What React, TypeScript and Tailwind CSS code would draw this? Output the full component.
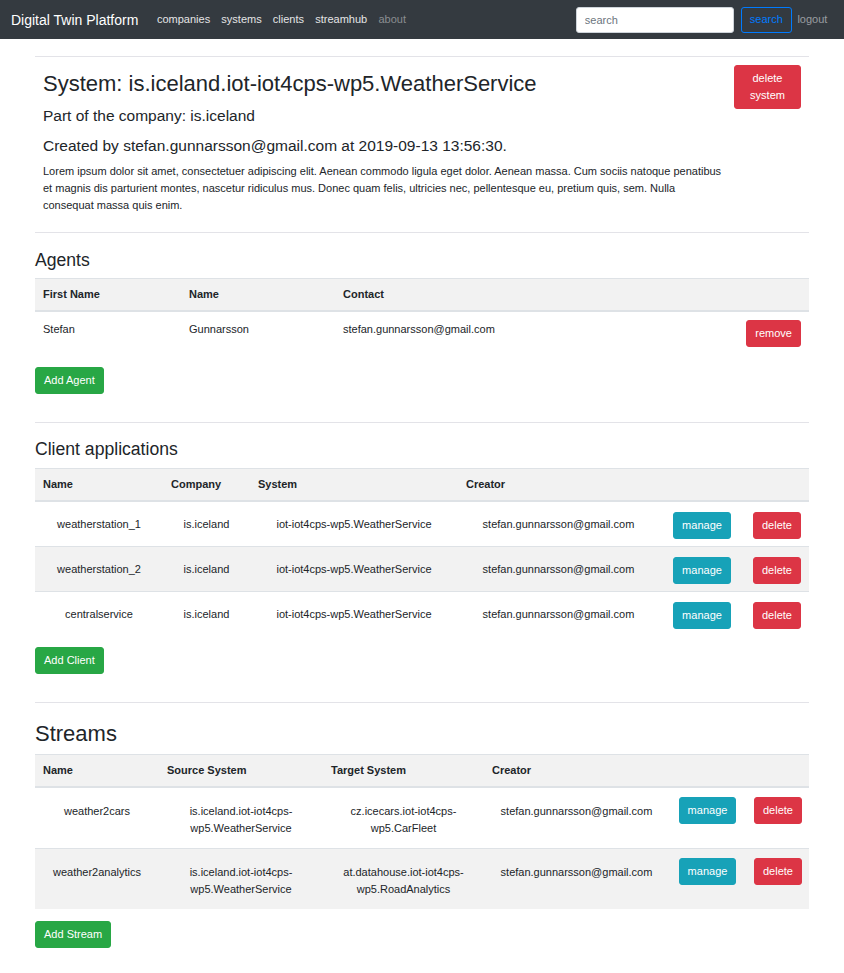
import React from "react";

const EMAIL = "stefan.gunnarsson@gmail.com";

const clients = [
  { name: "weatherstation_1", company: "is.iceland", system: "iot-iot4cps-wp5.WeatherService" },
  { name: "weatherstation_2", company: "is.iceland", system: "iot-iot4cps-wp5.WeatherService" },
  { name: "centralservice", company: "is.iceland", system: "iot-iot4cps-wp5.WeatherService" },
];

const streams = [
  { name: "weather2cars", source: "is.iceland.iot-iot4cps-wp5.WeatherService", target: "cz.icecars.iot-iot4cps-wp5.CarFleet" },
  { name: "weather2analytics", source: "is.iceland.iot-iot4cps-wp5.WeatherService", target: "at.datahouse.iot-iot4cps-wp5.RoadAnalytics" },
];

const btn = "inline-block rounded-[3px] border px-2 py-1 text-[11px] leading-[17px] text-white";
const danger = `${btn} bg-[#dc3545] border-[#dc3545]`;
const info = `${btn} bg-[#17a2b8] border-[#17a2b8]`;
const success = `${btn} bg-[#28a745] border-[#28a745]`;

const th = "border-t border-b-2 border-[#dee2e6] bg-[#f2f2f2] px-2 py-[7px] text-left font-bold leading-[17px]";

function Navbar() {
  return (
    <nav className="flex h-[39px] items-center bg-[#343a40] px-[11px] text-[11px]">
      <span className="mr-[13px] text-[14px] leading-[20px] text-white">Digital Twin Platform</span>
      <div className="flex">
        {["companies", "systems", "clients", "streamhub"].map((l) => (
          <a key={l} className="px-[5.6px] text-[#e4e5e6]">
            {l}
          </a>
        ))}
        <a className="px-[5.6px] text-[#8a8d90]">about</a>
      </div>
      <div className="ml-auto flex items-center">
        <input
          placeholder="search"
          className="h-[26px] w-[158px] rounded-[3px] border border-[#ced4da] bg-white px-2 text-[11px] text-[#495057] outline-none placeholder:text-[#6c757d]"
        />
        <button className="ml-[7px] h-[26px] rounded-[3px] border border-[#007bff] px-2 text-[11px] text-[#007bff]">
          search
        </button>
        <a className="px-[5.6px] text-[#9a9da0]">logout</a>
      </div>
    </nav>
  );
}

function Header() {
  return (
    <div className="flex justify-between px-2 pt-2">
      <div className="w-[682px]">
        <h2 className="mt-[6px] text-[22px] leading-[26px]">System: is.iceland.iot-iot4cps-wp5.WeatherService</h2>
        <p className="mt-[10px] text-[15.5px] leading-[18px]">Part of the company: is.iceland</p>
        <p className="mt-[12px] text-[15.5px] leading-[18px]">
          Created by {EMAIL} at 2019-09-13 13:56:30.
        </p>
        <p className="mt-[8px] text-[11px] leading-[16.8px]">
          Lorem ipsum dolor sit amet, consectetuer adipiscing elit. Aenean commodo ligula eget dolor. Aenean massa. Cum
          sociis natoque penatibus et magnis dis parturient montes, nascetur ridiculus mus. Donec quam felis, ultricies
          nec, pellentesque eu, pretium quis, sem. Nulla consequat massa quis enim.
        </p>
      </div>
      <div>
        <button className={`${danger} w-[67px] leading-[16.8px]`}>delete system</button>
      </div>
    </div>
  );
}

function Agents() {
  return (
    <section>
      <h4 className="mt-[17px] text-[17.6px] leading-[21px]">Agents</h4>
      <table className="mt-[7px] w-full table-fixed border-separate border-spacing-0 text-[11px]">
        <colgroup>
          <col className="w-[146px]" />
          <col className="w-[154px]" />
          <col />
          <col className="w-[72px]" />
        </colgroup>
        <thead>
          <tr>
            <th className={th}>First Name</th>
            <th className={th}>Name</th>
            <th className={th}>Contact</th>
            <th className={th}></th>
          </tr>
        </thead>
        <tbody>
          <tr>
            <td className="px-2 pt-[9px] pb-2 align-top leading-[17px]">Stefan</td>
            <td className="px-2 pt-[9px] pb-2 align-top leading-[17px]">Gunnarsson</td>
            <td className="px-2 pt-[9px] pb-2 align-top leading-[17px]">{EMAIL}</td>
            <td className="px-2 pt-2 pb-[9px] text-right align-top">
              <button className={danger}>remove</button>
            </td>
          </tr>
        </tbody>
      </table>
      <button className={`${success} mt-[11px]`}>Add Agent</button>
    </section>
  );
}

function Clients() {
  const td = "px-2 pt-[14px] pb-[13px] text-center align-top leading-[17px]";
  const tb = "px-2 pt-[10px] text-center align-top";
  return (
    <section>
      <h4 className="mt-[16px] text-[17.6px] leading-[21px]">Client applications</h4>
      <table className="mt-[8px] w-full table-fixed border-separate border-spacing-0 text-[11px]">
        <colgroup>
          <col className="w-[128px]" />
          <col className="w-[87px]" />
          <col className="w-[208px]" />
          <col className="w-[201px]" />
          <col className="w-[86px]" />
          <col className="w-[64px]" />
        </colgroup>
        <thead>
          <tr>
            <th className={th}>Name</th>
            <th className={th}>Company</th>
            <th className={th}>System</th>
            <th className={th}>Creator</th>
            <th className={th}></th>
            <th className={th}></th>
          </tr>
        </thead>
        <tbody>
          {clients.map((c, i) => {
            const row = `${i % 2 === 1 ? "bg-[#f2f2f2]" : ""} ${i > 0 ? "[&>td]:border-t [&>td]:border-[#dee2e6]" : ""}`;
            return (
              <tr key={c.name} className={row}>
                <td className={td}>{c.name}</td>
                <td className={td}>{c.company}</td>
                <td className={td}>{c.system}</td>
                <td className={td}>{EMAIL}</td>
                <td className={tb}>
                  <button className={info}>manage</button>
                </td>
                <td className={tb}>
                  <button className={danger}>delete</button>
                </td>
              </tr>
            );
          })}
        </tbody>
      </table>
      <button className={`${success} mt-[11px]`}>Add Client</button>
    </section>
  );
}

function Streams() {
  const td = "px-2 pt-[15px] pb-[11px] text-center align-top leading-[16.8px]";
  const tb = "px-2 pt-[9px] text-center align-top";
  return (
    <section>
      <h2 className="mt-[18px] text-[22px] leading-[26px]">Streams</h2>
      <table className="mt-[7px] w-full table-fixed border-separate border-spacing-0 text-[11px]">
        <colgroup>
          <col className="w-[124px]" />
          <col className="w-[164px]" />
          <col className="w-[161px]" />
          <col className="w-[185px]" />
          <col className="w-[77px]" />
          <col className="w-[63px]" />
        </colgroup>
        <thead>
          <tr>
            <th className={th}>Name</th>
            <th className={th}>Source System</th>
            <th className={th}>Target System</th>
            <th className={th}>Creator</th>
            <th className={th}></th>
            <th className={th}></th>
          </tr>
        </thead>
        <tbody>
          {streams.map((s, i) => {
            const row = `${i % 2 === 1 ? "bg-[#f2f2f2]" : ""} ${i > 0 ? "[&>td]:border-t [&>td]:border-[#dee2e6]" : ""}`;
            return (
              <tr key={s.name} className={row}>
                <td className={td}>{s.name}</td>
                <td className={td}>{s.source}</td>
                <td className={td}>{s.target}</td>
                <td className={td}>{EMAIL}</td>
                <td className={tb}>
                  <button className={info}>manage</button>
                </td>
                <td className={tb}>
                  <button className={danger}>delete</button>
                </td>
              </tr>
            );
          })}
        </tbody>
      </table>
      <button className={`${success} mt-[12px]`}>Add Stream</button>
    </section>
  );
}

export default function App() {
  return (
    <div className="min-h-screen bg-white font-['Liberation_Sans',Arial,sans-serif] text-[#212529]">
      <Navbar />
      <main className="px-[35px] pb-10">
        <hr className="mt-[17px] border-t border-[#e3e3e8]" />
        <Header />
        <hr className="mt-[19px] border-t border-[#e3e3e8]" />
        <Agents />
        <hr className="mt-[28px] border-t border-[#e3e3e8]" />
        <Clients />
        <hr className="mt-[28px] border-t border-[#e3e3e8]" />
        <Streams />
      </main>
    </div>
  );
}
